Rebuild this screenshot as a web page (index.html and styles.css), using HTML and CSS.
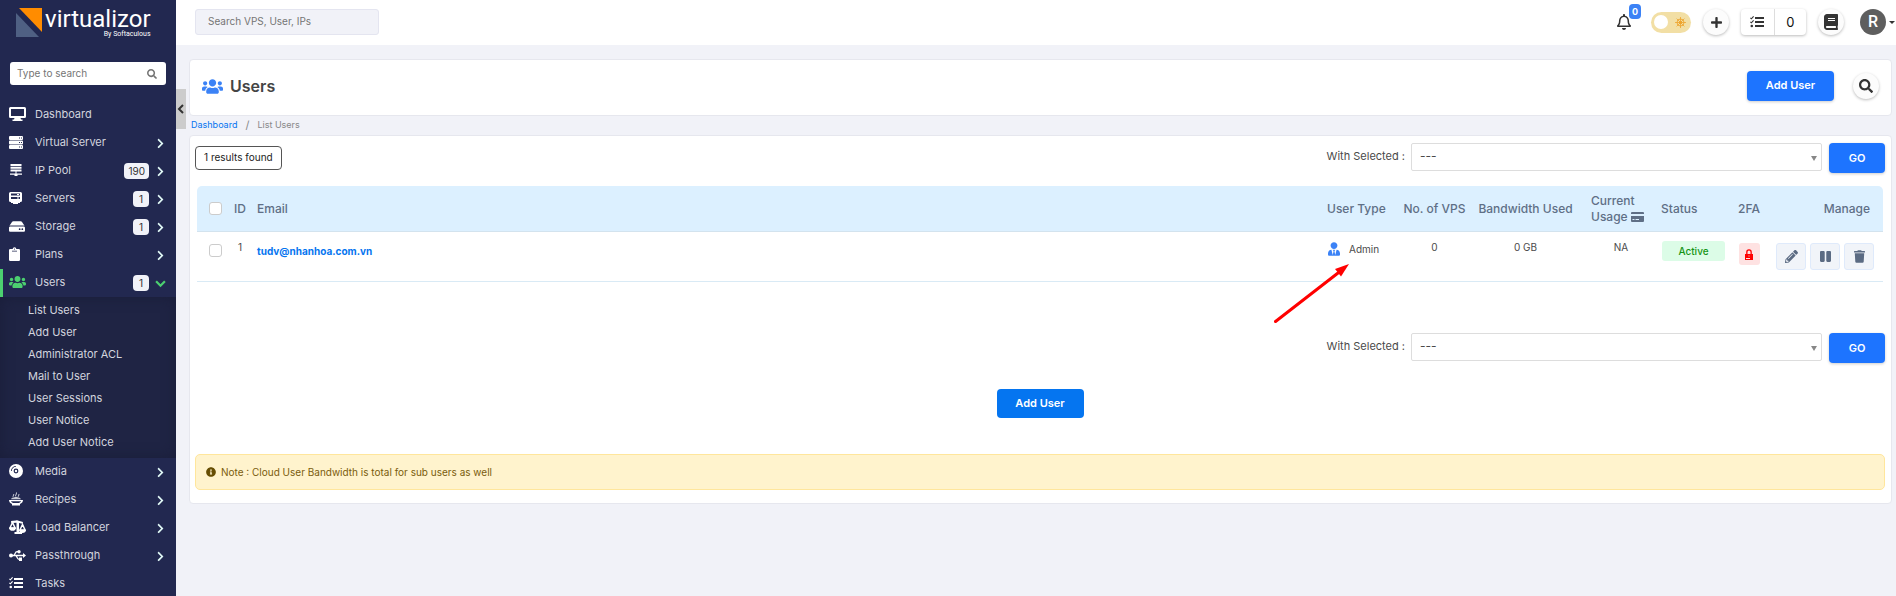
FILE: index.html
```html
<!DOCTYPE html>
<html lang="en">
<head>
<meta charset="utf-8">
<title>Users</title>
<meta name="viewport" content="width=device-width, initial-scale=1">
<link rel="stylesheet" href="styles.css">
</head>
<body>
<svg class="sprite" aria-hidden="true">
  <symbol id="right" viewBox="0 0 320 512"><path d="M285.476 272.971L91.132 467.314c-9.373 9.373-24.569 9.373-33.941 0l-22.667-22.667c-9.357-9.357-9.375-24.522-.04-33.901L188.505 256 34.484 101.255c-9.335-9.379-9.317-24.544.04-33.901l22.667-22.667c9.373-9.373 24.569-9.373 33.941 0L285.475 239.03c9.373 9.372 9.373 24.568.001 33.941z"/></symbol>
  <symbol id="search" viewBox="0 0 512 512"><path d="M505 442.7L405.3 343c-4.5-4.5-10.6-7-17-7H372c27.6-35.3 44-79.7 44-128C416 93.1 322.9 0 208 0S0 93.1 0 208s93.1 208 208 208c48.3 0 92.7-16.4 128-44v16.3c0 6.4 2.5 12.5 7 17l99.7 99.7c9.4 9.4 24.6 9.4 33.9 0l28.3-28.3c9.4-9.4 9.4-24.6.1-34zM208 336c-70.7 0-128-57.2-128-128 0-70.7 57.2-128 128-128 70.7 0 128 57.2 128 128 0 70.7-57.2 128-128 128z"/></symbol>
  <symbol id="users" viewBox="0 0 640 512"><path d="M96 224c35.3 0 64-28.7 64-64s-28.7-64-64-64-64 28.7-64 64 28.7 64 64 64zm448 0c35.3 0 64-28.7 64-64s-28.7-64-64-64-64 28.7-64 64 28.7 64 64 64zm32 32h-64c-17.6 0-33.5 7.1-45.1 18.6 40.3 22.1 68.9 62 75.1 109.4h66c17.7 0 32-14.3 32-32v-32c0-35.3-28.7-64-64-64zm-256 0c61.9 0 112-50.1 112-112S381.9 32 320 32 208 82.1 208 144s50.1 112 112 112zm76.8 32h-8.3c-20.8 10-43.9 16-68.5 16s-47.6-6-68.5-16h-8.3C179.6 288 128 339.6 128 403.2V432c0 26.5 21.5 48 48 48h288c26.5 0 48-21.5 48-48v-28.8c0-63.6-51.6-115.2-115.2-115.2zm-223.7-13.4C161.5 263.1 145.6 256 128 256H64c-35.3 0-64 28.7-64 64v32c0 17.7 14.3 32 32 32h65.9c6.3-47.4 34.9-87.3 75.2-109.4z"/></symbol>
  <symbol id="tasks" viewBox="0 0 14 12"><path d="M5 1h9v2H5zM5 5h9v2H5zM5 9h9v2H5z"/><path d="M.4 1.8l1 1L3.6.4M.4 5.8l1 1 2.2-2.4" fill="none" stroke="currentColor" stroke-width="1.1"/><circle cx="1.8" cy="10" r="1.3"/></symbol>
</svg>

<div class="app">
  <aside class="sidebar">
    <a class="logo" href="#" aria-label="virtualizor">
      <svg class="logo-mark" viewBox="0 0 26 29"><path fill="#ff8c00" d="M3 0h23v24z"/><path fill="#4f6083" d="M0 5v24h23z"/></svg>
      <span class="logo-text"><span class="logo-name">virtualizor</span><span class="logo-by">By Softaculous</span></span>
    </a>
    <form class="side-search">
      <input type="search" placeholder="Type to search" aria-label="Type to search">
      <svg><use href="#search"/></svg>
    </form>
    <ul class="menu">
      <li><a href="#"><span class="ico"><svg width="17" height="14" viewBox="0 0 17 14"><path fill-rule="evenodd" d="M1.500 0h14A1.500 1.500 0 0 1 17 1.500v8A1.500 1.500 0 0 1 15.500 11h-4l.5 1.500h1.500V14h-10v-1.500H5L5.500 11h-4A1.500 1.500 0 0 1 0 9.500v-8A1.500 1.500 0 0 1 1.500 0zM2 2v7h13V2z"/></svg></span><span class="name">Dashboard</span></a></li>
      <li><a href="#"><span class="ico"><svg width="14" height="13" viewBox="0 0 14 13"><path fill-rule="evenodd" d="M1 0h12a1 1 0 0 1 1 1v2a1 1 0 0 1-1 1H1a1 1 0 0 1-1-1V1a1 1 0 0 1 1-1zm9 1.500v1h1v-1zm2 0v1h1v-1zM1 4.500h12a1 1 0 0 1 1 1v2a1 1 0 0 1-1 1H1a1 1 0 0 1-1-1v-2a1 1 0 0 1 1-1zM10 6v1h1V6zm2 0v1h1V6zM1 9h12a1 1 0 0 1 1 1v2a1 1 0 0 1-1 1H1a1 1 0 0 1-1-1v-2a1 1 0 0 1 1-1zm9 1.500v1h1v-1zm2 0v1h1v-1z"/></svg></span><span class="name">Virtual Server</span><svg class="chev"><use href="#right"/></svg></a></li>
      <li><a href="#"><span class="ico"><svg width="14" height="12" viewBox="0 0 14 12"><path d="M1.500 0h11v2h-11zM1.500 2.800h11v2h-11zM1.500 5.600h11v2h-11zM6.500 7.600h1v2H13v1.200H8.500V12h-3v-1.200H1V9.600h5.500z"/></svg></span><span class="name">IP Pool</span><span class="count">190</span><svg class="chev"><use href="#right"/></svg></a></li>
      <li><a href="#"><span class="ico"><svg width="14" height="13" viewBox="0 0 14 13"><path fill-rule="evenodd" d="M1.500 0h10A1.500 1.500 0 0 1 13 1.500v7A1.500 1.500 0 0 1 11.500 10H11v1H9v1H4v-1H2v-1h-.5A1.500 1.500 0 0 1 0 8.500v-7A1.500 1.500 0 0 1 1.500 0zM2 1.500v2h9v-2zM2 5v2h9V5z"/><path d="M8 2h2v1H8zM8 5.500h2v1H8z"/></svg></span><span class="name">Servers</span><span class="count">1</span><svg class="chev"><use href="#right"/></svg></a></li>
      <li><a href="#"><span class="ico"><svg width="16" height="11" viewBox="0 64 576 384"><path fill-rule="evenodd" d="M576 304v96c0 26.510-21.490 48-48 48H48c-26.510 0-48-21.490-48-48v-96c0-26.510 21.490-48 48-48h480c26.510 0 48 21.490 48 48zm-48-80a79.557 79.557 0 0 1 30.777 6.165L462.250 85.374A48 48 0 0 0 422.311 64H153.689a48 48 0 0 0-39.938 21.374L17.223 230.165A79.557 79.557 0 0 1 48 224h480zM448 352a32 32 0 1 0 64 0 32 32 0 1 0-64 0zm-96 0a32 32 0 1 0 64 0 32 32 0 1 0-64 0z"/></svg></span><span class="name">Storage</span><span class="count">1</span><svg class="chev"><use href="#right"/></svg></a></li>
      <li><a href="#"><span class="ico"><svg width="11" height="14" viewBox="0 0 11 14"><path fill-rule="evenodd" d="M1.200 2h2.500a1.800 1.800 0 0 1 3.600 0h2.500A1.200 1.200 0 0 1 11 3.200v9.600A1.200 1.200 0 0 1 9.800 14H1.200A1.200 1.200 0 0 1 0 12.800V3.200A1.200 1.200 0 0 1 1.200 2zm3.700 0a.6.6 0 1 0 1.200 0 .6.6 0 1 0-1.200 0zM3 3.700v.7h5v-.7z"/></svg></span><span class="name">Plans</span><svg class="chev"><use href="#right"/></svg></a></li>
      <li class="open"><a href="#"><span class="ico"><svg width="17" height="14"><use href="#users"/></svg></span><span class="name">Users</span><span class="count">1</span><svg class="chev" viewBox="0 0 10 10"><path d="M1 3l4 4 4-4" fill="none" stroke="currentColor" stroke-width="2"/></svg></a>
        <ul class="submenu">
          <li><a href="#">List Users</a></li>
          <li><a href="#">Add User</a></li>
          <li><a href="#">Administrator ACL</a></li>
          <li><a href="#">Mail to User</a></li>
          <li><a href="#">User Sessions</a></li>
          <li><a href="#">User Notice</a></li>
          <li><a href="#">Add User Notice</a></li>
        </ul>
      </li>
      <li><a href="#"><span class="ico"><svg width="14" height="14" viewBox="0 0 14 14"><path fill-rule="evenodd" d="M7 0a7 7 0 1 1 0 14A7 7 0 0 1 7 0zm0 4.600a2.400 2.400 0 1 0 0 4.800 2.400 2.400 0 0 0 0-4.800zM2 7h.8A4.200 4.200 0 0 1 7 2.800V2a5 5 0 0 0-5 5z"/><circle cx="7" cy="7" r="1.200"/></svg></span><span class="name">Media</span><svg class="chev"><use href="#right"/></svg></a></li>
      <li><a href="#"><span class="ico"><svg width="14" height="14" viewBox="0 0 14 14"><path fill-rule="evenodd" d="M0 8h14c0 2-1.200 3.300-3 4v1.500H3V12C1.200 11.300 0 10 0 8zM2 9.300c.5 1 1.200 1.400 2.200 1.700h5.600c1-.3 1.700-.7 2.200-1.700z"/><path d="M2 7.200c.6-1.400 2-1.600 3-1.600 1-1 3-1 4 0 1.400 0 2.600.6 3 1.600z" opacity=".75"/><path d="M4 4.700c0-1 .8-1.200.8-2.500M6.500 4.200c0-1.200 1-1.600 1-3.700M9.200 4.700c0-1 .8-1.200.8-2.500" fill="none" stroke="currentColor" stroke-width=".9"/></svg></span><span class="name">Recipes</span><svg class="chev"><use href="#right"/></svg></a></li>
      <li><a href="#"><span class="ico"><svg width="17" height="14" viewBox="0 0 17 14"><path d="M2 1l5-.4C7.500 0 9 0 9.500.8l4.500 1.200-.3 1.800-3.700-.9V12H13v2H5.500v-2h2V2.800L2.300 3z"/><path d="M3.500 2.500L.9 8h5.200zM13.500 4.500l-2.600 5.500h5.200z" fill="none" stroke="currentColor" stroke-width="1.500"/><path d="M0 7.500h7C7 10 5.500 10.800 3.500 10.800S0 10 0 7.500zM10 9.700h7c0 2.300-1.500 3.300-3.500 3.300S10 12 10 9.700z"/></svg></span><span class="name">Load Balancer</span><svg class="chev"><use href="#right"/></svg></a></li>
      <li><a href="#"><span class="ico"><svg width="17" height="11" viewBox="0 0 17 11"><circle cx="2" cy="5.500" r="2"/><path d="M14 3l3 2.500L14 8zM10 7.500h3V11h-3z"/><circle cx="10" cy="1.700" r="1.700"/><path d="M2 5.500h12M4.500 5.500C6 5.500 6 1.700 8 1.700h2M6.500 5.500C8 5.500 8 9.300 10 9.300h1" fill="none" stroke="currentColor" stroke-width="1.300"/></svg></span><span class="name">Passthrough</span><svg class="chev"><use href="#right"/></svg></a></li>
      <li><a href="#"><span class="ico"><svg width="14" height="12"><use href="#tasks"/></svg></span><span class="name">Tasks</span></a></li>
    </ul>
  </aside>

  <div class="page">
    <button class="collapse" type="button" aria-label="Collapse menu"><svg viewBox="0 0 8 10"><path d="M6 1L2 5l4 4" fill="none" stroke="currentColor" stroke-width="2"/></svg></button>
    <header class="topbar">
      <input class="top-search" type="text" placeholder="Search VPS, User, IPs" aria-label="Search VPS, User, IPs">
      <div class="tools">
        <button class="bell" type="button" aria-label="Notifications"><svg width="14" height="16" viewBox="0 0 448 512"><path d="M224 512c35.320 0 63.970-28.650 63.970-64H160.030c0 35.350 28.650 64 63.970 64zm215.390-149.710c-19.320-20.760-55.470-51.990-55.470-154.290 0-77.700-54.480-139.900-127.940-155.160V32c0-17.670-14.320-32-31.980-32s-31.980 14.330-31.980 32v20.840C118.560 68.100 64.080 130.300 64.080 208c0 102.300-36.150 133.530-55.470 154.290-6 6.450-8.660 14.160-8.610 21.710.11 16.400 12.980 32 32.100 32h383.800c19.120 0 32-15.600 32.100-32 .05-7.550-2.610-15.270-8.610-21.710zM67.530 368c21.220-27.970 44.420-74.330 44.530-159.420 0-.2-.06-.38-.06-.58 0-61.860 50.140-112 112-112s112 50.140 112 112c0 .2-.06.38-.06.58.11 85.100 23.310 131.460 44.530 159.420H67.530z"/></svg><span class="badge">0</span></button>
        <button class="toggle" type="button" aria-label="Light theme"><span class="knob"></span><svg width="11" height="11" viewBox="0 0 11 11" fill="none" stroke="currentColor"><circle cx="5.500" cy="5.500" r="3.500" stroke-width=".9" fill="none"/><circle cx="5.500" cy="5.500" r="1.300" fill="currentColor"/><path d="M5.500 0v11M0 5.500h11M1.600 1.600l7.800 7.800M9.400 1.600L1.600 9.400" stroke-width=".8"/></svg></button>
        <button class="round" type="button" aria-label="Add"><svg width="11" height="13" viewBox="0 0 448 512"><path d="M416 208H272V64c0-17.670-14.330-32-32-32h-32c-17.670 0-32 14.330-32 32v144H32c-17.670 0-32 14.330-32 32v32c0 17.670 14.330 32 32 32h144v144c0 17.670 14.330 32 32 32h32c17.670 0 32-14.330 32-32V304h144c17.670 0 32-14.330 32-32v-32c0-17.670-14.330-32-32-32z"/></svg></button>
        <button class="task-count" type="button" aria-label="Tasks"><span><svg width="14" height="12"><use href="#tasks"/></svg></span><span>0</span></button>
        <button class="round" type="button" aria-label="Documentation"><svg width="14" height="16" viewBox="0 0 448 512"><path d="M448 360V24c0-13.300-10.700-24-24-24H96C43 0 0 43 0 96v320c0 53 43 96 96 96h328c13.300 0 24-10.700 24-24v-16c0-7.500-3.500-14.300-8.900-18.700-4.200-15.400-4.200-59.300 0-74.700 5.400-4.300 8.900-11.100 8.900-18.600zM128 134c0-3.300 2.700-6 6-6h212c3.300 0 6 2.700 6 6v20c0 3.300-2.700 6-6 6H134c-3.300 0-6-2.700-6-6v-20zm0 64c0-3.300 2.700-6 6-6h212c3.300 0 6 2.700 6 6v20c0 3.300-2.700 6-6 6H134c-3.300 0-6-2.700-6-6v-20zm253.400 250H96c-17.700 0-32-14.300-32-32 0-17.600 14.400-32 32-32h285.400c-1.900 17.100-1.900 46.900 0 64z"/></svg></button>
        <button class="account" type="button" aria-label="Account"><span class="avatar">R</span><span class="caret"></span></button>
      </div>
    </header>

    <main class="main">
      <section class="card heading">
        <svg class="heading-ico"><use href="#users"/></svg>
        <h1>Users</h1>
        <a class="btn" href="#">Add User</a>
        <button class="round" type="button" aria-label="Search"><svg width="14" height="14"><use href="#search"/></svg></button>
      </section>
      <nav class="crumbs" aria-label="Breadcrumb"><a href="#">Dashboard</a><span class="slash">/</span><span>List Users</span></nav>

      <section class="card list">
        <div class="bulk">
          <span class="found">1 results found</span>
          <label for="bulk-top">With Selected :</label>
          <span class="pick"><select id="bulk-top"><option>---</option></select></span>
          <button class="btn go" type="button">GO</button>
        </div>
        <table class="users">
          <colgroup><col class="c-check"><col class="c-id"><col><col class="c-type"><col class="c-vps"><col class="c-band"><col class="c-usage"><col class="c-status"><col class="c-2fa"><col class="c-manage"></colgroup>
          <thead>
            <tr><th class="mid"><input type="checkbox" aria-label="Select all"></th><th class="mid">ID</th><th class="email">Email</th><th>User Type</th><th class="mid">No. of VPS</th><th class="mid">Bandwidth Used</th><th class="usage">Current Usage <svg width="13" height="10" viewBox="0 0 13 10"><path fill-rule="evenodd" d="M1 0h11a1 1 0 0 1 1 1v1H0V1a1 1 0 0 1 1-1zM0 4h13v5a1 1 0 0 1-1 1H1a1 1 0 0 1-1-1zm1.500 3v1h2V7zm3 0v1H8V7z"/></svg></th><th>Status</th><th class="mid">2FA</th><th class="manage">Manage</th></tr>
          </thead>
          <tbody>
            <tr>
              <td class="mid"><input type="checkbox" aria-label="Select tudv@nhanhoa.com.vn"></td>
              <td class="mid">1</td>
              <td class="email"><a href="#">tudv@nhanhoa.com.vn</a></td>
              <td class="type"><span class="role"><svg width="12" height="14" viewBox="0 0 448 512"><path d="M224 256c70.700 0 128-57.300 128-128S294.700 0 224 0 96 57.300 96 128s57.300 128 128 128zm95.800 32.600L272 480l-32-136 32-56h-96l32 56-32 136-47.800-191.400C56.900 292 0 350.300 0 422.400V464c0 26.500 21.500 48 48 48h352c26.500 0 48-21.500 48-48v-41.600c0-72.100-56.900-130.400-128.200-133.800z"/></svg>Admin</span>
                <svg class="pointer" viewBox="0 0 76 60" aria-hidden="true"><path d="M1.500 58.500L64 10" stroke="#f00" stroke-width="3" stroke-linecap="round"/><path fill="#f00" d="M75 1L61 6l6 7.500z"/></svg></td>
              <td class="mid">0</td>
              <td class="mid">0 GB</td>
              <td class="mid">NA</td>
              <td><span class="status">Active</span></td>
              <td class="mid"><button class="lock" type="button" aria-label="Two-factor off"><svg width="8" height="11" viewBox="0 0 8 11"><path fill-rule="evenodd" d="M1.200 5V3a2.800 2.800 0 0 1 5.600 0v2H8v6H0V5zm1.300 0h3V3a1.500 1.500 0 0 0-3 0zM1 9v1h4V9zm2.500-2.500v1h1v-1z"/></svg></button></td>
              <td><div class="acts">
                <button type="button" aria-label="Edit"><svg width="13" height="13" viewBox="0 0 512 512"><path d="M497.900 142.100l-46.100 46.100c-4.700 4.700-12.300 4.700-17 0l-111-111c-4.700-4.700-4.700-12.300 0-17l46.100-46.100c18.700-18.700 49.100-18.700 67.900 0l60.100 60.100c18.800 18.700 18.800 49.100 0 67.900zM284.200 99.800L21.600 362.400.4 483.900c-2.900 16.400 11.400 30.600 27.800 27.800l121.500-21.300 262.600-262.600c4.700-4.700 4.700-12.300 0-17l-111-111c-4.800-4.700-12.400-4.700-17.100 0zM124.100 339.900c-5.500-5.500-5.500-14.300 0-19.800l154-154c5.500-5.500 14.300-5.500 19.800 0s5.500 14.300 0 19.800l-154 154c-5.500 5.500-14.300 5.500-19.800 0zM88 424h48v36.300l-64.500 11.300-31.100-31.100L51.700 376H88v48z"/></svg></button>
                <button type="button" aria-label="Suspend"><svg width="11" height="13" viewBox="0 0 448 512"><path d="M144 479H48c-26.500 0-48-21.500-48-48V79c0-26.500 21.500-48 48-48h96c26.500 0 48 21.500 48 48v352c0 26.500-21.500 48-48 48zm304-48V79c0-26.500-21.500-48-48-48h-96c-26.500 0-48 21.500-48 48v352c0 26.500 21.500 48 48 48h96c26.500 0 48-21.500 48-48z"/></svg></button>
                <button type="button" aria-label="Delete"><svg width="11" height="13" viewBox="0 0 448 512"><path d="M432 32H312l-9.400-18.700A24 24 0 0 0 281.100 0H166.800a23.720 23.720 0 0 0-21.400 13.300L136 32H16A16 16 0 0 0 0 48v32a16 16 0 0 0 16 16h416a16 16 0 0 0 16-16V48a16 16 0 0 0-16-16zM53.200 467a48 48 0 0 0 47.900 45h245.800a48 48 0 0 0 47.900-45L416 128H32z"/></svg></button>
              </div></td>
            </tr>
          </tbody>
        </table>
        <div class="bulk bulk-end">
          <label for="bulk-bottom">With Selected :</label>
          <span class="pick"><select id="bulk-bottom"><option>---</option></select></span>
          <button class="btn go" type="button">GO</button>
        </div>
        <a class="btn add" href="#">Add User</a>
        <p class="note"><svg viewBox="0 0 512 512"><path d="M256 8C119.043 8 8 119.083 8 256c0 136.997 111.043 248 248 248s248-111.003 248-248C504 119.083 392.957 8 256 8zm0 110c23.196 0 42 18.804 42 42s-18.804 42-42 42-42-18.804-42-42 18.804-42 42-42zm56 254c0 6.627-5.373 12-12 12h-88c-6.627 0-12-5.373-12-12v-24c0-6.627 5.373-12 12-12h12v-64h-12c-6.627 0-12-5.373-12-12v-24c0-6.627 5.373-12 12-12h64c6.627 0 12 5.373 12 12v100h12c6.627 0 12 5.373 12 12v24z"/></svg>Note : Cloud User Bandwidth is total for sub users as well</p>
      </section>
    </main>
  </div>
</div>
</body>
</html>
```

FILE: styles.css
```css
* { box-sizing: border-box; }
body { margin: 0; background: #f1f2f8; color: #4a4a4a; font: 10px/16px Inter, "Open Sans", sans-serif; }
button, input, select { font: inherit; color: inherit; }
button { border: 0; padding: 0; background: none; cursor: pointer; }
a { color: #0575f0; text-decoration: none; }
ul { list-style: none; margin: 0; padding: 0; }
svg { fill: currentColor; flex: none; }
.sprite { display: none; }
.app { display: flex; min-height: 100vh; }

/* Sidebar */
.sidebar { position: sticky; top: 0; flex: none; width: 176px; height: 100vh; overflow-y: auto; scrollbar-width: none; background: #222850; color: #d2d4de; }
.sidebar a { color: inherit; }
.sidebar .logo { display: flex; gap: 3px; padding: 8px 0 0 16px; height: 62px; color: #fff; }
.logo-mark { width: 26px; height: 29px; }
.logo-text { display: flex; flex-direction: column; align-items: flex-end; font-family: Roboto, sans-serif; }
.logo-name { font-size: 24px; line-height: 22px; }
.logo-by { font-size: 7px; line-height: 8px; }
.side-search { display: flex; align-items: center; height: 23px; margin: 0 10px 16px; padding: 0 9px 0 7px; border-radius: 3px; background: #fff; color: #757575; }
.side-search input { flex: 1; min-width: 0; padding: 0 0 2px; border: 0; outline: 0; background: none; }
.side-search svg { width: 10px; height: 10px; }
input::placeholder { color: #757575; opacity: 1; }
.menu > li > a { display: flex; align-items: center; height: 28px; padding: 0 10px 0 9px; font-size: 11px; }
.menu .ico { display: flex; width: 26px; padding-bottom: 2px; color: #fff; }
.menu .name { flex: 1; padding-bottom: 2px; }
.count { min-width: 16px; margin-right: 6px; padding: 0 4px; border-radius: 4px; background: #f1f2f8; color: #333; font-size: 10px; text-align: center; }
.chev { width: 11px; height: 11px; color: #e0f8f5; }
.menu > .open > a { padding-left: 6px; border-left: 3px solid #4cd070; }
.menu .open .ico, .open .chev { color: #4cd070; }
.submenu { padding: 2px 0 5px 28px; background: #1f2444; box-shadow: inset 0 0 14px #1a1e3a; font-size: 11px; }
.submenu a { display: block; line-height: 22px; }

/* Top bar */
.page { position: relative; flex: 1; min-width: 0; }
.collapse { position: absolute; top: 89px; left: 0; width: 10px; height: 40px; background: #ccc; color: #333; }
.collapse svg { display: block; width: 8px; height: 10px; margin: auto; }
.topbar { display: flex; align-items: center; justify-content: space-between; height: 45px; padding: 0 1px 1px 19px; background: #fff; color: #333; }
.top-search { width: 184px; height: 26px; padding: 0 12px 2px; border: 1px solid #e4e5f0; border-radius: 3px; background: #f1f2f8; }
.tools { display: flex; align-items: center; gap: 12px; }
.bell { position: relative; width: 14px; height: 16px; margin-right: 8px; }
.bell svg { display: block; }
.badge { position: absolute; left: 12px; top: -10px; width: 12px; height: 15px; border-radius: 4px; background: #3b82f6; color: #fff; font-size: 9px; font-weight: 700; line-height: 15px; text-align: center; }
.toggle { display: flex; align-items: center; justify-content: space-between; width: 40px; height: 21px; padding: 0 5px 0 3px; border-radius: 11px; background: #f2dfa5; color: #eda52f; }
.knob { width: 14px; height: 14px; border-radius: 50%; background: #fff; }
.round { display: grid; place-items: center; width: 26px; height: 26px; border-radius: 50%; background: #fcfcfc; box-shadow: 0 1px 3px #0004; color: #333; }
.task-count { display: grid; grid-template-columns: 1fr 1fr; width: 65px; height: 26px; border-radius: 4px; box-shadow: 0 1px 3px #0004; font-size: 13px; }
.task-count span { display: grid; place-items: center; }
.task-count span + span { border-left: 1px solid #ddd; color: #111; }
.account { display: flex; align-items: center; gap: 3px; margin-left: 4px; }
.avatar { width: 26px; height: 26px; border-radius: 50%; background: #5e5e5e; color: #fff; font: 500 16px/25px Roboto, sans-serif; }
.caret { border: 3px solid transparent; border-top-color: #333; border-bottom: 0; }

/* Content */
.main { padding: 14px 4px 20px 13px; }
.card { border: 1px solid #e6e7ee; border-radius: 4px; background: #fff; }
.heading { display: flex; align-items: center; height: 57px; padding: 0 12px 3px; }
.heading-ico { width: 21px; height: 17px; color: #3b82f6; }
.heading h1 { flex: 1; margin: 0 0 0 7px; font-size: 16px; font-weight: 600; color: #444; }
.heading .round { margin-left: 19px; }
.btn { display: inline-block; height: 30px; border-radius: 4px; background: #1d74ff; box-shadow: 0 1px 3px #0003; color: #fff; font-size: 11px; font-weight: 600; line-height: 29px; text-align: center; white-space: nowrap; }
.heading .btn { width: 87px; }
.crumbs { display: flex; height: 19px; padding-left: 2px; font-size: 9px; line-height: 18px; color: #888; }
.slash { margin: 0 8px; font-size: 11px; }
.list { padding: 7px 6px 13px 5px; }
.bulk { display: flex; align-items: flex-start; justify-content: flex-end; }
.found { height: 24px; margin: 3px auto 0 0; padding: 0 8px; border: 1px solid #555; border-radius: 4px; color: #222; line-height: 21px; }
.bulk label { margin-right: 6px; font-size: 11px; line-height: 27px; }
.pick { position: relative; width: 411px; }
.pick select { display: block; appearance: none; width: 100%; height: 28px; padding: 0 8px 2px; border: 1px solid #ddd; border-radius: 2px; background: #fff; font-size: 12px; }
.pick::after { content: ""; position: absolute; right: 5px; top: 13px; border: 3px solid transparent; border-top: 5px solid #888; border-bottom: 0; pointer-events: none; }
.go { width: 56px; margin-left: 7px; padding: 0; }

.users { width: calc(100% - 4px); margin: 13px 2px 0; border-spacing: 0; table-layout: fixed; }
.c-check { width: 36px; } .c-id { width: 14px; } .c-type { width: 72px; } .c-vps { width: 71px; } .c-band { width: 111px; }
.c-usage { width: 80px; } .c-status { width: 70px; } .c-2fa { width: 36px; } .c-manage { width: 116px; }
th, td { padding: 0; text-align: left; white-space: nowrap; }
th { height: 46px; border-bottom: 1px solid #d3e3ee; background: #dcf0ff; color: #5f6f86; font-size: 12px; font-weight: 500; }
th:first-child { border-top-left-radius: 5px; }
th:last-child { border-top-right-radius: 5px; }
td { height: 50px; padding-top: 7px; border-bottom: 1px solid #d9eaf5; vertical-align: top; }
.mid { text-align: center; }
.email { padding-left: 10px; }
td.email { padding-top: 11px; font-weight: 700; }
th.usage { padding-left: 10px; white-space: normal; }
.usage svg { vertical-align: -1px; }
.manage { padding-right: 13px; text-align: right; }
input[type="checkbox"] { display: block; appearance: none; width: 13px; height: 13px; margin: 0 auto; border: 1px solid #ccc; border-radius: 3px; background: #fff; }
td input[type="checkbox"] { margin-top: 5px; }
.type { position: relative; }
.role { display: flex; align-items: center; gap: 9px; padding: 2px 0 0 1px; }
.role svg { color: #3b82f6; }
.pointer { position: absolute; left: -53px; top: 31px; width: 76px; height: 60px; }
.status { display: block; width: 63px; height: 20px; margin: 2px 0 0 1px; border-radius: 3px; background: #dcfce7; color: #169416; font-weight: 500; line-height: 20px; text-align: center; }
.lock { width: 21px; height: 22px; margin-top: 4px; border-radius: 3px; background: #fee2e2; color: #f00; }
.lock svg { display: block; margin: auto; }
.acts { display: flex; justify-content: flex-end; gap: 4px; padding: 4px 9px 0 0; }
.acts button { display: grid; place-items: center; width: 30px; height: 27px; border: 1px solid #dfeafb; border-radius: 3px; background: #f1f4f9; color: #5b6b83; }
.bulk-end { margin-top: 51px; }
.add { display: block; width: 87px; height: 29px; margin: 26px auto 0; background: #0575f0; box-shadow: none; }
.note { display: flex; gap: 5px; height: 36px; margin: 36px 0 0; padding: 9px 10px; border: 1px solid #ffe69c; border-radius: 5px; background: #fff3cd; color: #7a5c0c; }
.note svg { width: 10px; height: 10px; margin-top: 3px; color: #664d03; }
```
